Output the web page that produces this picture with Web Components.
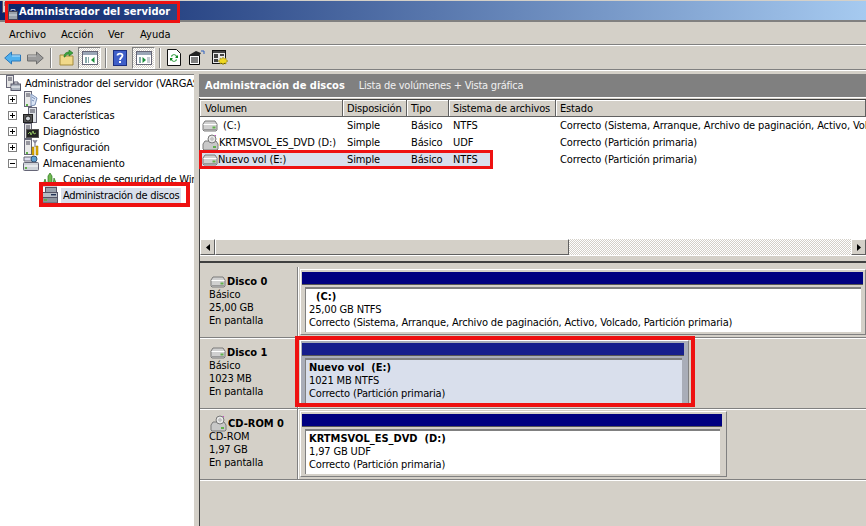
<!DOCTYPE html>
<html lang="es">
<head>
<meta charset="utf-8">
<title>Administrador del servidor</title>
<style>
  html, body { margin: 0; height: 100%; overflow: hidden; background: #d4d0c8; }
  body { font: 11px "DejaVu Sans Condensed", "Liberation Sans", sans-serif; color: #000; letter-spacing: -.15px; }
</style>
</head>
<body>
<server-manager></server-manager>

<script>
const tower = `<rect x="1.500" y=".5" width="7" height="15" fill="#e9e9e9" stroke="#667"/><path d="M3 3h4M3 5h4" stroke="#445"/><rect x="3" y="13" width="2" height="2" fill="#5fb04a"/>`;

const icons = {
  disk: `<svg viewBox="0 0 16 12" width="16" height="12"><path d="M1 4 3 1h10l2 3v6l-1 1H2L1 10z" fill="#d0d0d0" stroke="#7a7a7a"/><path d="M1.500 4.500h13" stroke="#fff"/><rect x="10.500" y="6.500" width="3" height="2" fill="#5fb04a"/><path d="M2 9.500h12" stroke="#999"/></svg>`,
  cd: `<svg viewBox="0 0 17 17" width="17" height="17"><path d="M1 10 3 7h11l2 3v5l-1 1H2l-1-1z" fill="#c8c8c8" stroke="#7a7a7a"/><rect x="11" y="12" width="3" height="2" fill="#5fb04a"/><circle cx="10" cy="5" r="4" fill="#e8e8e8" stroke="#777"/><circle cx="10" cy="5" r="1.200" fill="#fff" stroke="#777" stroke-width=".6"/><path d="M13 1h1v1h-1z" fill="#d040d0"/></svg>`,
  server: `<svg viewBox="0 0 16 16" width="16" height="16"><rect x="1.500" y=".5" width="7" height="12" fill="#e4e4e4" stroke="#667"/><path d="M3 3h4M3 5h4" stroke="#445"/><rect x="6" y="9" width="9.500" height="6.500" fill="#aab2bd" stroke="#556"/><path d="M9 9V7h4v2" fill="none" stroke="#556"/><path d="M6 12h9" stroke="#fff"/></svg>`,
  roles: `<svg viewBox="0 0 16 17" width="16" height="17">${tower}<path d="M8 3l6 4-2 7-4 1z" fill="#d9e4f5" stroke="#7a8fb5"/><path d="M9 6l3 2M9 9l2 1" stroke="#7a8fb5"/></svg>`,
  features: `<svg viewBox="0 0 16 17" width="16" height="17"><rect x="5.500" y=".5" width="8" height="15" fill="#dfe3e8" stroke="#667"/><path d="M7 3h5M7 5h5" stroke="#445"/><rect x=".5" y="7.500" width="9" height="8" fill="#555" stroke="#222"/><circle cx="5" cy="11.500" r="2.500" fill="#cfd3d8" stroke="#222"/></svg>`,
  diag: `<svg viewBox="0 0 16 17" width="16" height="17"><rect x="1.500" y=".5" width="7" height="15" fill="#e4e4e4" stroke="#667"/><path d="M3 3h4M3 5h4" stroke="#445"/><rect x="3.500" y="6.500" width="12" height="8" fill="#222" stroke="#555"/><path d="M5 11l2-2 1 3 2-4 1 3 2-1" fill="none" stroke="#9c6" stroke-width=".9"/></svg>`,
  config: `<svg viewBox="0 0 16 17" width="16" height="17">${tower}<path d="M12 1v7M10 1l2 3 2-3" fill="none" stroke="#889" stroke-width="1.300"/><path d="M9 8h2v8H9zM13 7h2v9h-2z" fill="#e8b300" stroke="#8a6a00" stroke-width=".5"/></svg>`,
  storage: `<svg viewBox="0 0 16 17" width="16" height="17"><path d="M1 2h8v4H1z" fill="#dde" stroke="#667"/><circle cx="11" cy="4" r="3" fill="#5fa0d0" stroke="#357"/><rect x=".5" y="7.500" width="15" height="8" rx="1" fill="#cdd2d8" stroke="#667"/><path d="M1 11h14" stroke="#fff"/><rect x="2" y="12" width="2" height="2" fill="#5fb04a"/></svg>`,
  backup: `<svg viewBox="0 0 16 16" width="16" height="16"><path d="M1 14l2-6 2 6zM6 14V5l2-3 2 3v9zM11 14l1-7 3 7z" fill="#6fb84f" stroke="#2d7a20" stroke-width=".7"/><path d="M1 15h14" stroke="#99a"/></svg>`,
  diskmgmt: `<svg viewBox="0 0 17 17" width="17" height="17"><rect x="3.500" y=".5" width="11" height="5" fill="#9aa2ac" stroke="#556"/><rect x=".5" y="5.500" width="15" height="5" fill="#b7bdc5" stroke="#556"/><rect x=".5" y="10.500" width="15" height="5.500" fill="#8d949d" stroke="#556"/><rect x="9" y="7" width="5" height="1.400" fill="#235"/><rect x="2" y="12" width="3" height="2" fill="#5fb04a"/></svg>`,
  back: `<svg viewBox="0 0 17 14" width="17" height="14"><path d="M.7 7 7.500 1v3h9v6h-9v3z" fill="#4fb0ee" stroke="#2a78bb"/><path d="M8 5h8" stroke="#bde3fb"/></svg>`,
  forward: `<svg viewBox="0 0 17 14" width="17" height="14"><path d="M16.300 7 9.500 1v3h-9v6h9v3z" fill="#9b9b9b" stroke="#6d6d6d"/><path d="M1 5h8" stroke="#d0d0d0"/></svg>`,
  folderUp: `<svg viewBox="0 0 15 16" width="15" height="16"><path d="M1 5h5l1 1h7v9H1z" fill="#f1d98a" stroke="#a38a3c"/><path d="M5 7C5 3 8 2 10 2V0l4 3-4 3V4C8 4 7 5 6 7z" fill="#3ea63e" stroke="#1f6f1f" stroke-width=".6"/></svg>`,
  paneLeft: `<svg viewBox="0 0 16 14" width="16" height="14"><rect x=".5" y=".5" width="15" height="13" fill="#fff" stroke="#667"/><rect x="1" y="1" width="14" height="3" fill="#9aa6b6"/><path d="M3 6h2v6H3zM6 6h1v6H6z" fill="#8aa"/><path d="M12.500 6v6l-3.500-3z" fill="#1c8f3a"/></svg>`,
  paneRight: `<svg viewBox="0 0 16 14" width="16" height="14"><rect x=".5" y=".5" width="15" height="13" fill="#fff" stroke="#667"/><rect x="1" y="1" width="14" height="3" fill="#9aa6b6"/><path d="M3 6h2v6H3z" fill="#8aa"/><path d="M6.500 6v6l3.500-3z" fill="#1c8f3a"/><path d="M11 6h3v6h-3z" fill="#c7cdd4"/></svg>`,
  help: `<svg viewBox="0 0 14 16" width="14" height="16"><rect x=".5" y=".5" width="13" height="15" fill="#3f5fc8" stroke="#1c2f80"/><path d="M4.500 5.500C4.500 3 9.500 3 9.500 5.500 9.500 7.500 7 7.500 7 10" fill="none" stroke="#fff" stroke-width="1.800"/><rect x="6" y="11" width="2" height="2" fill="#fff"/></svg>`,
  refresh: `<svg viewBox="0 0 14 17" width="14" height="17"><path d="M.5.500h9l4 4v12H.5z" fill="#fff" stroke="#111"/><path d="M4 7a3.500 3.500 0 0 1 6 0l1-1v3H8l1-1a2 2 0 0 0-4 0zM10 11a3.500 3.500 0 0 1-6 0l-1 1V9h3l-1 1a2 2 0 0 0 4 0z" fill="#0f8a20"/></svg>`,
  props: `<svg viewBox="0 0 17 15" width="17" height="15"><path d="M1.500 5.500h10v9h-10z" fill="#fff" stroke="#000"/><path d="M3 8h7M3 10h7M3 12h7" stroke="#000"/><path d="M1 5 8 1l5 2-2 3H1z" fill="#222"/><path d="M13 1h3v3" fill="none" stroke="#2a5fc0"/></svg>`,
  gear: `<svg viewBox="0 0 16 16" width="16" height="16"><rect x=".5" y=".5" width="13" height="13" fill="#e8e8e8" stroke="#111"/><path d="M1 1h12v2H1zM2 4h4v4H2zM8 4h4v2H8zM2 9h4v3H2z" fill="#444"/><path d="M11 7l1 2 2-1 0 2 2 1-2 1 0 2-2-1-1 2-1-2-2 1 0-2-2-1 2-1 0-2 2 1z" fill="#efd820" stroke="#8a7a00" stroke-width=".5"/></svg>`,
  manager: `<svg viewBox="0 0 18 20" width="18" height="20"><rect x="2.500" y=".5" width="6" height="12" fill="#d8d8d8" stroke="#556"/><path d="M4 3h3M4 5h3" stroke="#445"/><rect x="8.500" y="11.500" width="9" height="8" fill="#9aa1ab" stroke="#445"/><path d="M11 11V9.500h4V11" fill="none" stroke="#bbc"/><path d="M9 15h8" stroke="#d4d8de"/></svg>`
};

class UiIcon extends HTMLElement {
  connectedCallback () {
    const root = this.shadowRoot || this.attachShadow({ mode: 'open' });
    root.innerHTML = `<style>:host { display: inline-flex; flex: none; } svg { display: block; }</style>${icons[this.getAttribute('name')] || ''}`;
  }
}

// title + menu + toolbar rows
class TitleBar extends HTMLElement {
  connectedCallback () {
    this.attachShadow({ mode: 'open' }).innerHTML = `
      <style>
        :host { display: flex; align-items: flex-start; height: 19px; margin-top: 1px; overflow: hidden;
          background: linear-gradient(90deg, #0a246a, #a6caf0); border-bottom: 2px solid #808080;
          color: #fff; font-weight: bold; font-size: 11px; letter-spacing: .05px; }
        ui-icon { margin-top: -1px; }
        span { margin: 4px 0 0 1px; }
      </style>
      <ui-icon name="manager"></ui-icon><span><slot></slot></span>`;
  }
}

class MenuBar extends HTMLElement {
  connectedCallback () {
    this.attachShadow({ mode: 'open' }).innerHTML = `
      <style>
        :host { display: flex; align-items: center; height: 23px; box-sizing: border-box; padding: 3px 0 0 9px; letter-spacing: 0; border-bottom: 1px solid #808080; box-shadow: 0 1px 0 #fff; }
        ::slotted(span:nth-child(1)) { width: 52px; }
        ::slotted(span:nth-child(2)) { width: 47px; }
        ::slotted(span:nth-child(3)) { width: 32px; }
      </style>
      <slot></slot>`;
  }
}

class ToolBar extends HTMLElement {
  connectedCallback () {
    this.attachShadow({ mode: 'open' }).innerHTML = `
      <style>
        :host { display: flex; align-items: center; height: 23px; margin-top: 1px; padding-left: 4px; border-bottom: 1px solid #808080; box-shadow: 0 1px 0 #fff; }
      </style>
      <slot></slot>`;
  }
}

class ToolButton extends HTMLElement {
  connectedCallback () {
    this.attachShadow({ mode: 'open' }).innerHTML = `
      <style>
        :host { display: flex; align-items: center; justify-content: center; flex: none; height: 22px; width: ${this.getAttribute('w') || 23}px; margin-right: ${this.getAttribute('mr') || 0}px; box-sizing: border-box; }
        :host([on]) { border: 1px solid; border-color: #808080 #fff #fff #808080;
          background: repeating-conic-gradient(#fff 0 25%, #d4d0c8 0 50%) 0 0 / 2px 2px; }
      </style>
      <ui-icon name="${this.getAttribute('icon')}"></ui-icon>`;
  }
}

class ToolSep extends HTMLElement {
  connectedCallback () {
    this.attachShadow({ mode: 'open' }).innerHTML = `
      <style>:host { display: block; flex: none; width: 1px; height: 20px; background: #808080; box-shadow: 1px 0 0 #fff; margin: 0 ${this.getAttribute('m') || 8}px 0 ${this.getAttribute('l') || 4}px; }</style>`;
  }
}

// left tree
class TreeRow extends HTMLElement {
  connectedCallback () {
    const level = Number(this.getAttribute('level') || 0);
    const exp = this.getAttribute('exp');
    const box = exp
      ? `<svg width="9" height="9" viewBox="0 0 9 9"><rect x=".5" y=".5" width="8" height="8" fill="#fff" stroke="#808080"/><path d="M2 4.500h5${exp === 'plus' ? 'M4.500 2v5' : ''}" stroke="#000"/></svg>`
      : '';
    this.attachShadow({ mode: 'open' }).innerHTML = `
      <style>
        :host { display: flex; align-items: center; height: 16px; white-space: nowrap; }
        .exp { width: 9px; height: 9px; margin-left: 8px; margin-right: 6px; display: flex; }
        .lead { width: 5px; flex: none; }
        .lead2 { width: 42px; flex: none; }
        .txt { margin-left: ${level === 2 ? 3 : 2}px; padding: 1px 2px; }
        :host([selected]) .txt { background: #d9dfec; margin-left: 2px; padding: 1px 2px; letter-spacing: -.3px; }
      </style>
      ${level === 0 ? '<span class="lead"></span>' : ''}
      ${level === 2 ? '<span class="lead2"></span>' : ''}
      ${exp ? `<span class="exp">${box}</span>` : ''}
      <ui-icon name="${this.getAttribute('icon')}"></ui-icon>
      <span class="txt"><slot></slot></span>`;
  }
}

class TreePane extends HTMLElement {
  connectedCallback () {
    this.attachShadow({ mode: 'open' }).innerHTML = `
      <style>
        :host { display: flex; flex-direction: column; flex: none; width: 194px; box-sizing: border-box; background: #fff; overflow: hidden; border-top: 1px solid #808080; }
      </style>
      <slot></slot>`;
  }
}

// volume list
class VolumeRow extends HTMLElement {
  connectedCallback () {
    this.attachShadow({ mode: 'open' }).innerHTML = `
      <style>
        :host { display: grid; grid-template-columns: 143px 64px 42px 107px 1fr; height: 17px; align-items: center; white-space: nowrap; overflow: hidden; letter-spacing: -.12px; }
        :host([head]) { background: #d4d0c8; letter-spacing: -.15px; }
        :host([selected]) { background: linear-gradient(90deg, #d9dfec 290px, transparent 290px); }
        ::slotted(*) { padding-left: 4px; overflow: hidden; display: flex; align-items: center; }
      </style>
      <slot></slot>`;
  }
}

class HeadCell extends HTMLElement {
  connectedCallback () {
    this.attachShadow({ mode: 'open' }).innerHTML = `
      <style>
        :host { display: flex; align-items: center; height: 17px; box-sizing: border-box; border-right: 1px solid #606060; border-bottom: 1px solid #606060;
          box-shadow: inset 1px 1px 0 #fff; }
      </style>
      <slot></slot>`;
  }
}

class HScrollbar extends HTMLElement {
  connectedCallback () {
    this.attachShadow({ mode: 'open' }).innerHTML = `
      <style>
        :host { display: flex; height: 16px; margin-top: auto; background: repeating-conic-gradient(#fff 0 25%, #d4d0c8 0 50%) 0 0 / 2px 2px; }
        .b { flex: none; box-sizing: border-box; background: #d4d0c8; border: 1px solid; border-color: #fff #606060 #606060 #fff; display: flex; align-items: center; justify-content: center; }
        .arrow { width: 15px; }
        .thumb { width: 354px; }
        .grow { flex: 1; }
      </style>
      <div class="b arrow"><svg width="4" height="7"><path d="M4 0v7L0 3.500z"/></svg></div>
      <div class="b thumb"></div>
      <div class="grow"></div>
      <div class="b arrow"><svg width="4" height="7"><path d="M0 0v7l4-3.500z"/></svg></div>`;
  }
}

// graphic view
class DiskRow extends HTMLElement {
  connectedCallback () {
    this.attachShadow({ mode: 'open' }).innerHTML = `
      <style>
        :host { display: flex; height: 71px; box-sizing: border-box; border-bottom: 1px solid #808080; box-shadow: 0 1px 0 #fff; }
        .label { flex: none; width: 98px; box-sizing: border-box; padding: 6px 0 0 9px; border-right: 1px solid #808080; box-shadow: 1px 0 0 #fff; line-height: 13px; }
        .name { display: flex; align-items: center; font-weight: bold; letter-spacing: 0; height: 15px; margin-left: 1px; position: relative; top: 1px; }
        .name span { margin-left: 1px; }
        .vols { display: flex; flex: 1; padding: 2px 0 0 2px; min-width: 0; }
      </style>
      <div class="label">
        <div class="name"><ui-icon name="${this.getAttribute('icon')}"></ui-icon><span>${this.getAttribute('name')}</span></div>
        <div>${this.getAttribute('kind')}<br>${this.getAttribute('size')}<br>En pantalla</div>
      </div>
      <div class="vols"><slot></slot></div>`;
  }
}

class DiskVolume extends HTMLElement {
  connectedCallback () {
    this.attachShadow({ mode: 'open' }).innerHTML = `
      <style>
        :host { display: flex; flex-direction: column; flex: none; box-sizing: border-box; height: 66px; padding: 2px ${this.getAttribute('pr') || 2}px 2px 1px;
          border: 1px solid; border-color: #fff #808080 #808080 #fff; width: ${this.getAttribute('w')}px; }
        :host([selected]) { background: #a9adb8; }
        .bar { height: 12px; background: #000080; flex: none; border-bottom: 1px solid #555; }
        :host([selected]) .bar { background: #161e8c; }
        .inner { flex: 1; margin: 2px 2px 0 3px; padding: 1px 0 0 3px; background: #fff; line-height: 13px; border-top: 2px solid #808080; border-left: 1px solid #808080; box-sizing: border-box; white-space: nowrap; overflow: hidden; }
        :host([selected]) .inner { background: #d9dfec; }
        .t { font-weight: bold; letter-spacing: 0; }
      </style>
      <div class="bar"></div>
      <div class="inner">
        <div class="t"><slot name="title"></slot></div>
        <slot></slot>
      </div>`;
  }
}

class RedMark extends HTMLElement {
  connectedCallback () {
    const [x, y, w, h] = this.getAttribute('rect').split(' ');
    this.attachShadow({ mode: 'open' }).innerHTML = `
      <style>
        :host { position: absolute; left: ${x}px; top: ${y}px; width: ${w}px; height: ${h}px; box-sizing: border-box; border: ${this.getAttribute('t') || 3}px solid #ee1111; pointer-events: none; }
      </style>`;
  }
}

class ServerManager extends HTMLElement {
  connectedCallback () {
    this.attachShadow({ mode: 'open' }).innerHTML = `
      <style>
        :host { display: flex; flex-direction: column; width: 866px; height: 526px; position: relative; overflow: hidden; background: #d4d0c8; }
        .main { display: flex; flex: 1; min-height: 0; margin-top: 4px; }
        .split { flex: none; width: 5px; background: #d4d0c8; }
        .right { flex: 1; min-width: 0; display: flex; flex-direction: column; border-left: 1px solid #404040; }
        .head { display: flex; align-items: center; gap: 14px; height: 23px; flex: none; padding-left: 6px; background: #808080; color: #fff; border-bottom: 1px solid #fff; white-space: nowrap; margin-left: -1px; }
        .head b { letter-spacing: 0; }
        .head span { color: #f0f0f0; letter-spacing: -.23px; }
        .list { height: 155px; flex: none; display: flex; flex-direction: column; background: #fff; border-top: 1px solid #404040; margin-top: 1px; }
        .list ui-icon { margin-left: -2px; }
        .gap { padding-left: 5px; }
        .vol-head { padding-left: 5px; }
        .divider { height: 8px; flex: none; border-bottom: 2px solid #404040; border-top: 1px solid #fff; box-sizing: border-box; }
        .graph { flex: 1; padding-top: 4px; }
      </style>
      <title-bar>Administrador del servidor</title-bar>
      <menu-bar>
        <span>Archivo</span><span>Acción</span><span>Ver</span><span>Ayuda</span>
      </menu-bar>
      <tool-bar>
        <tool-button icon="back" w="17" mr="6"></tool-button>
        <tool-button icon="forward" w="17"></tool-button>
        <tool-sep l="6" m="8"></tool-sep>
        <tool-button icon="folderUp" w="15" mr="4"></tool-button>
        <tool-button icon="paneLeft" w="23" on></tool-button>
        <tool-sep l="4" m="7"></tool-sep>
        <tool-button icon="help" w="14" mr="5"></tool-button>
        <tool-button icon="paneRight" w="23" on></tool-button>
        <tool-sep l="4" m="7"></tool-sep>
        <tool-button icon="refresh" w="14" mr="7"></tool-button>
        <tool-button icon="props" w="17" mr="7"></tool-button>
        <tool-button icon="gear" w="16"></tool-button>
      </tool-bar>
      <div class="main">
        <tree-pane>
          <tree-row icon="server">Administrador del servidor (VARGAS)</tree-row>
          <tree-row level="1" exp="plus" icon="roles">Funciones</tree-row>
          <tree-row level="1" exp="plus" icon="features">Características</tree-row>
          <tree-row level="1" exp="plus" icon="diag">Diagnóstico</tree-row>
          <tree-row level="1" exp="plus" icon="config">Configuración</tree-row>
          <tree-row level="1" exp="minus" icon="storage">Almacenamiento</tree-row>
          <tree-row level="2" icon="backup">Copias de seguridad de Windows</tree-row>
          <tree-row level="2" icon="diskmgmt" selected>Administración de discos</tree-row>
        </tree-pane>
        <div class="split"></div>
        <div class="right">
          <div class="head"><b>Administración de discos</b><span>Lista de volúmenes + Vista gráfica</span></div>
          <div class="list">
            <volume-row head>
              <head-cell class="vol-head">Volumen</head-cell><head-cell>Disposición</head-cell><head-cell>Tipo</head-cell><head-cell>Sistema de archivos</head-cell><head-cell>Estado</head-cell>
            </volume-row>
            <volume-row>
              <span><ui-icon name="disk"></ui-icon><span class="gap">(C:)</span></span><span>Simple</span><span>Básico</span><span>NTFS</span><span>Correcto (Sistema, Arranque, Archivo de paginación, Activo, Volcado, Partición primaria)</span>
            </volume-row>
            <volume-row>
              <span><ui-icon name="cd"></ui-icon>KRTMSVOL_ES_DVD (D:)</span><span>Simple</span><span>Básico</span><span>UDF</span><span>Correcto (Partición primaria)</span>
            </volume-row>
            <volume-row selected>
              <span><ui-icon name="disk"></ui-icon>Nuevo vol (E:)</span><span>Simple</span><span>Básico</span><span>NTFS</span><span>Correcto (Partición primaria)</span>
            </volume-row>
            <h-scrollbar></h-scrollbar>
          </div>
          <div class="divider"></div>
          <div class="graph">
            <disk-row icon="disk" name="Disco 0" kind="Básico" size="25,00 GB">
              <disk-volume w="566"><span slot="title">&nbsp;&nbsp;(C:)</span>25,00 GB NTFS<br>Correcto (Sistema, Arranque, Archivo de paginación, Activo, Volcado, Partición primaria)</disk-volume>
            </disk-row>
            <disk-row icon="disk" name="Disco 1" kind="Básico" size="1023 MB">
              <disk-volume w="389" pr="4" selected><span slot="title">Nuevo vol&nbsp;&nbsp;(E:)</span>1021 MB NTFS<br>Correcto (Partición primaria)</disk-volume>
            </disk-row>
            <disk-row icon="cd" name="CD-ROM 0" kind="CD-ROM" size="1,97 GB">
              <disk-volume w="427" pr="4"><span slot="title">KRTMSVOL_ES_DVD&nbsp;&nbsp;(D:)</span>1,97 GB UDF<br>Correcto (Partición primaria)</disk-volume>
            </disk-row>
          </div>
        </div>
      </div>
      <red-mark rect="5 1 175 22"></red-mark>
      <red-mark rect="39 182 151 25" t="4"></red-mark>
      <red-mark rect="199 150 294 19"></red-mark>
      <red-mark rect="295 336 400 71" t="4"></red-mark>`;
  }
}

customElements.define('ui-icon', UiIcon);
customElements.define('title-bar', TitleBar);
customElements.define('menu-bar', MenuBar);
customElements.define('tool-bar', ToolBar);
customElements.define('tool-button', ToolButton);
customElements.define('tool-sep', ToolSep);
customElements.define('tree-row', TreeRow);
customElements.define('tree-pane', TreePane);
customElements.define('volume-row', VolumeRow);
customElements.define('head-cell', HeadCell);
customElements.define('h-scrollbar', HScrollbar);
customElements.define('disk-row', DiskRow);
customElements.define('disk-volume', DiskVolume);
customElements.define('red-mark', RedMark);
customElements.define('server-manager', ServerManager);
</script>
</body>
</html>
